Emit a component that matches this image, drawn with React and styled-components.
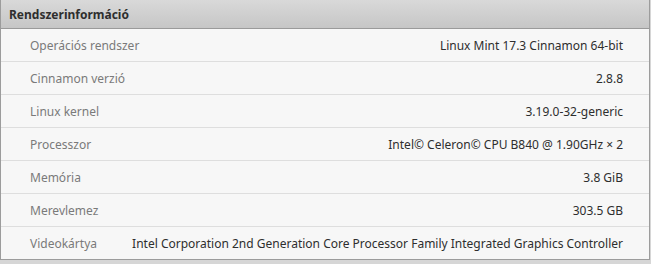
import React from "react";
import styled, { createGlobalStyle } from "styled-components";

const Global = createGlobalStyle`
  html, body { margin: 0; padding: 0; background: #d6d6d6; }
  body { font-family: "Noto Sans", "DejaVu Sans", sans-serif; }
`;

const Panel = styled.div`
  width: 648px;
  border: 1px solid #9c9c9c;
  border-top: none;
  background: #f7f7f7;
`;

const Header = styled.div`
  height: 28px;
  display: flex;
  align-items: center;
  padding-left: 8px;
  background: linear-gradient(#d9d9d9, #c6c6c6);
  border-bottom: 1px solid #9a9a9a;
  font-weight: bold;
  font-size: 12px;
  color: #2e2e2e;
`;

const Row = styled.div`
  height: 32px;
  display: flex;
  align-items: center;
  justify-content: space-between;
  gap: 16px;
  padding: 0 26px 0 29px;
  font-size: 12px;
  border-bottom: ${(p) => (p.$last ? "none" : "1px solid #dedede")};
`;

const Label = styled.span`
  color: #7a7a7a;
  white-space: nowrap;
`;

const Value = styled.span`
  color: #2e2e2e;
  white-space: nowrap;
`;

const rows = [
  ["Operációs rendszer", "Linux Mint 17.3 Cinnamon 64-bit"],
  ["Cinnamon verzió", "2.8.8"],
  ["Linux kernel", "3.19.0-32-generic"],
  ["Processzor", "Intel© Celeron© CPU B840 @ 1.90GHz × 2"],
  ["Memória", "3.8 GiB"],
  ["Merevlemez", "303.5 GB"],
  [
    "Videokártya",
    "Intel Corporation 2nd Generation Core Processor Family Integrated Graphics Controller",
  ],
];

export default function App() {
  return (
    <>
      <Global />
      <Panel>
        <Header>Rendszerinformáció</Header>
        {rows.map(([l, v], i) => (
          <Row key={l} $last={i === rows.length - 1}>
            <Label>{l}</Label>
            <Value>{v}</Value>
          </Row>
        ))}
      </Panel>
    </>
  );
}
